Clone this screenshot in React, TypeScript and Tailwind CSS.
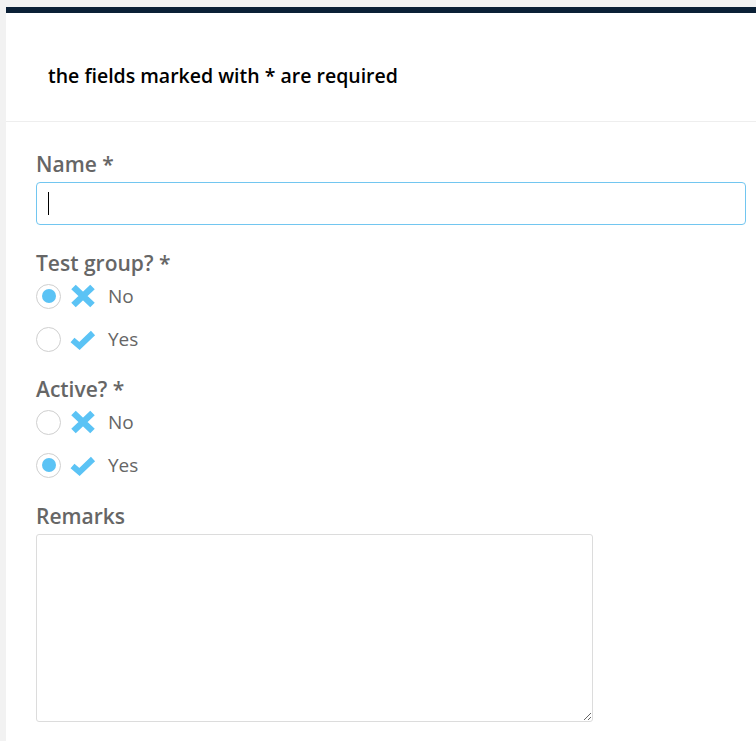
import { useState } from "react";

type Choice = "no" | "yes";

function CrossIcon() {
    return (
        <svg width="26" height="24" viewBox="0 0 26 24" className="blur-[0.6px]">
            <path d="M3.5 3 L22.5 21 M22.5 3 L3.5 21" stroke="#5bc3f5" strokeWidth="6.5" strokeLinecap="butt" fill="none" />
        </svg>
    );
}

function CheckIcon() {
    return (
        <svg width="26" height="24" viewBox="0 0 26 24" className="blur-[0.6px]">
            <path d="M2.5 13 L9.5 19 L23 6" stroke="#5bc3f5" strokeWidth="6" strokeLinejoin="miter" fill="none" />
        </svg>
    );
}

function RadioRow({ checked, label, icon, onClick }: { checked: boolean; label: string; icon: React.ReactNode; onClick: () => void }) {
    return (
        <label className="flex h-[36px] items-center cursor-pointer" onClick={onClick}>
            <span className="flex h-[25px] w-[25px] items-center justify-center rounded-full border border-[#cfcfcf] bg-white">
                {checked && <span className="h-[14px] w-[14px] rounded-full bg-[#5bc3f5]" />}
            </span>
            <span className="ml-[9px] flex w-[26px] justify-center">{icon}</span>
            <span className="ml-[12px] text-[19px] text-[#666]">{label}</span>
        </label>
    );
}

function YesNo({ value, onChange }: { value: Choice; onChange: (v: Choice) => void }) {
    return (
        <div className="flex flex-col gap-[7px] pt-[1px]">
            <RadioRow checked={value === "no"} label="No" icon={<CrossIcon />} onClick={() => onChange("no")} />
            <RadioRow checked={value === "yes"} label="Yes" icon={<CheckIcon />} onClick={() => onChange("yes")} />
        </div>
    );
}

export default function App() {
    const [name, setName] = useState("");
    const [testGroup, setTestGroup] = useState<Choice>("no");
    const [active, setActive] = useState<Choice>("yes");
    const [remarks, setRemarks] = useState("");

    return (
        <div className="min-h-screen bg-[#f2f2f2] pl-[6px] pt-[7px] font-['Open_Sans',sans-serif]">
            <div className="min-h-[734px] border-t-[6px] border-[#0b2036] bg-white">
                {/* Header */}
                <div className="border-b border-[#eeeeee] pl-[42px] pt-[50px] pb-[33px]">
                    <p className="text-[19.5px] leading-[25px] font-semibold text-black">the fields marked with * are required</p>
                </div>

                {/* Form */}
                <form className="pl-[30px] pt-[28px]" onSubmit={(e) => e.preventDefault()}>
                    <label className="block text-[21px] leading-[28px] font-semibold text-[#666]">Name *</label>
                    <div className="relative mt-[4px] w-[710px]">
                        <input
                            value={name}
                            onChange={(e) => setName(e.target.value)}
                            className="h-[43px] w-full rounded-[4px] border border-[#72c6f0] px-[12px] text-[18px] text-[#333] outline-none"
                        />
                        {name === "" && <span className="absolute left-[12px] top-[10px] h-[23px] w-px bg-black" />}
                    </div>

                    <div className="mt-[24px] text-[21px] leading-[28px] font-semibold text-[#666]">Test group? *</div>
                    <YesNo value={testGroup} onChange={setTestGroup} />

                    <div className="mt-[18px] text-[21px] leading-[28px] font-semibold text-[#666]">Active? *</div>
                    <YesNo value={active} onChange={setActive} />

                    <label className="mt-[19px] block text-[21px] leading-[28px] font-semibold text-[#666]">Remarks</label>
                    <textarea
                        value={remarks}
                        onChange={(e) => setRemarks(e.target.value)}
                        className="mt-[4px] block h-[188px] w-[557px] rounded-[3px] border border-[#dcdcdc] p-2 text-[18px] outline-none"
                    />
                </form>
            </div>
        </div>
    );
}
